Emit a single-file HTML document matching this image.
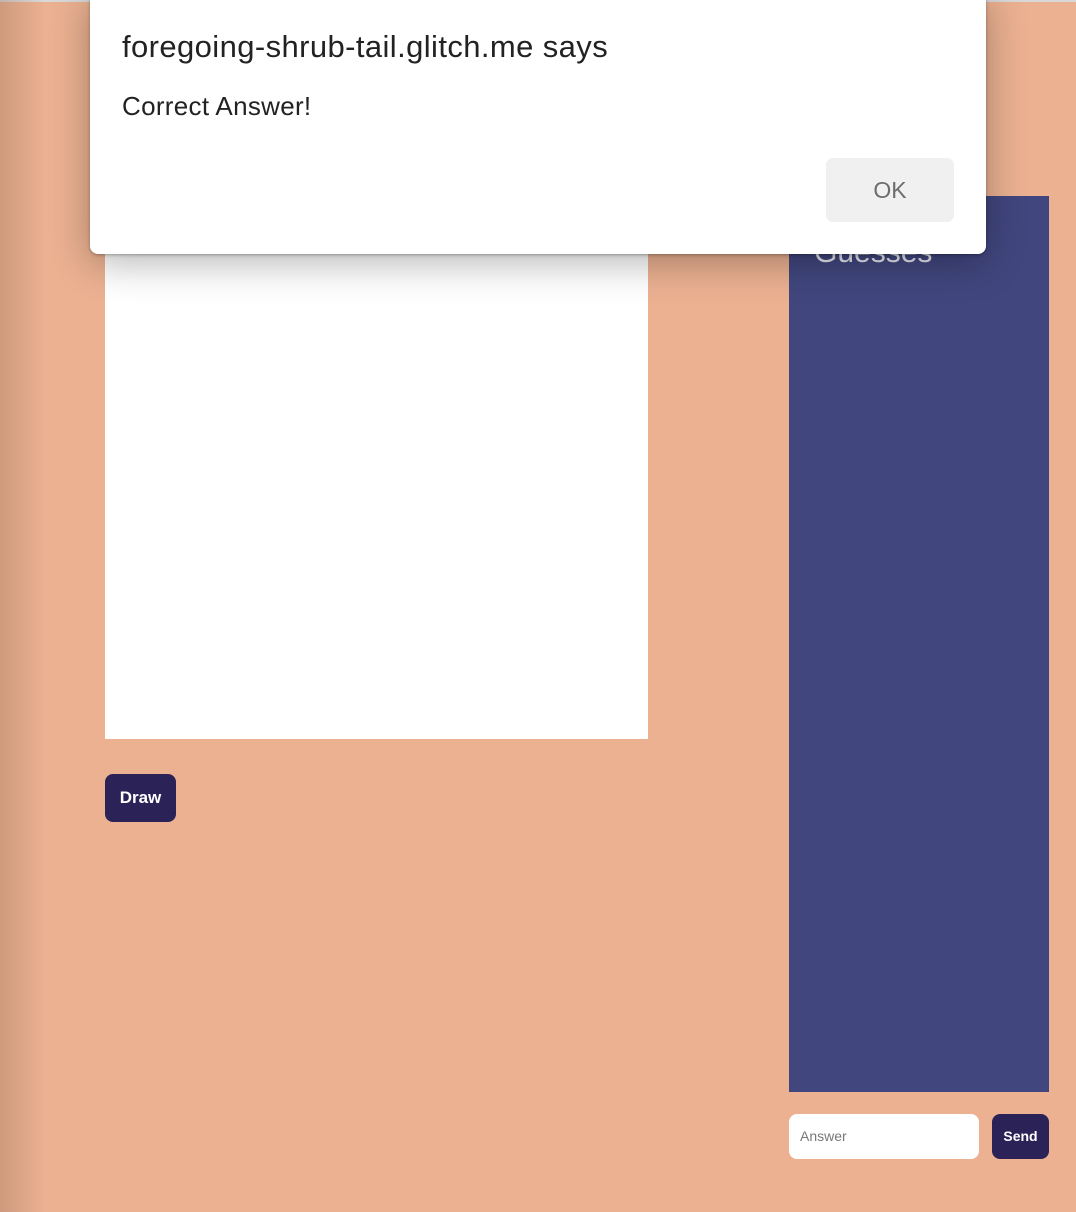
<!DOCTYPE html>
<html><head><meta charset="utf-8"><style>
html,body{margin:0;padding:0;width:1076px;height:1212px;overflow:hidden;background:#ebb191;font-family:"Liberation Sans",sans-serif;position:relative}
.topline{position:absolute;left:0;top:0;width:1076px;height:2px;background:#d8d8d8}
.leftshade{position:absolute;left:0;top:0;width:45px;height:1212px;background:linear-gradient(to right,rgba(150,110,90,0.35),rgba(150,110,90,0))}
.canvas{position:absolute;left:105px;top:196px;width:543px;height:543px;background:#fff}
.draw{position:absolute;left:105px;top:774px;width:71px;height:48px;background:#2b2357;border-radius:8px;color:#fff;font-size:17px;font-weight:bold;line-height:48px;text-align:center}
.panel{position:absolute;left:789px;top:196px;width:260px;height:896px;background:#41467e}
.ptitle{position:absolute;left:814px;top:236px;color:#e6e6ee;font-size:30px}
.ans{position:absolute;left:789px;top:1114px;width:190px;height:45px;background:#fff;border-radius:8px;color:#777;font-size:14px;line-height:45px;padding-left:11px;box-sizing:border-box}
.send{position:absolute;left:992px;top:1114px;width:57px;height:45px;background:#2b2357;border-radius:8px;color:#fff;font-size:14px;font-weight:bold;line-height:45px;text-align:center}
.dlg{position:absolute;left:90px;top:-10px;width:896px;height:264px;background:#fff;border-radius:8px;box-shadow:0 8px 40px rgba(0,0,0,0.3),0 1px 3px rgba(0,0,0,0.3)}
.t1{position:absolute;left:122px;top:29px;font-size:31px;letter-spacing:0.4px;color:#222}
.t2{position:absolute;left:122px;top:91px;font-size:26px;letter-spacing:0.3px;color:#222}
.ok{position:absolute;left:826px;top:158px;width:128px;height:64px;background:#f0f0f0;border-radius:7px;color:#6d6d6d;font-size:23px;line-height:64px;text-align:center}
</style></head><body>
<div class="topline"></div>
<div class="leftshade"></div>
<div class="canvas"></div>
<div class="draw">Draw</div>
<div class="panel"></div>
<div class="ptitle">Guesses</div>
<div class="ans">Answer</div>
<div class="send">Send</div>
<div class="dlg"></div>
<div class="t1">foregoing-shrub-tail.glitch.me says</div>
<div class="t2">Correct Answer!</div>
<div class="ok">OK</div>
</body></html>
